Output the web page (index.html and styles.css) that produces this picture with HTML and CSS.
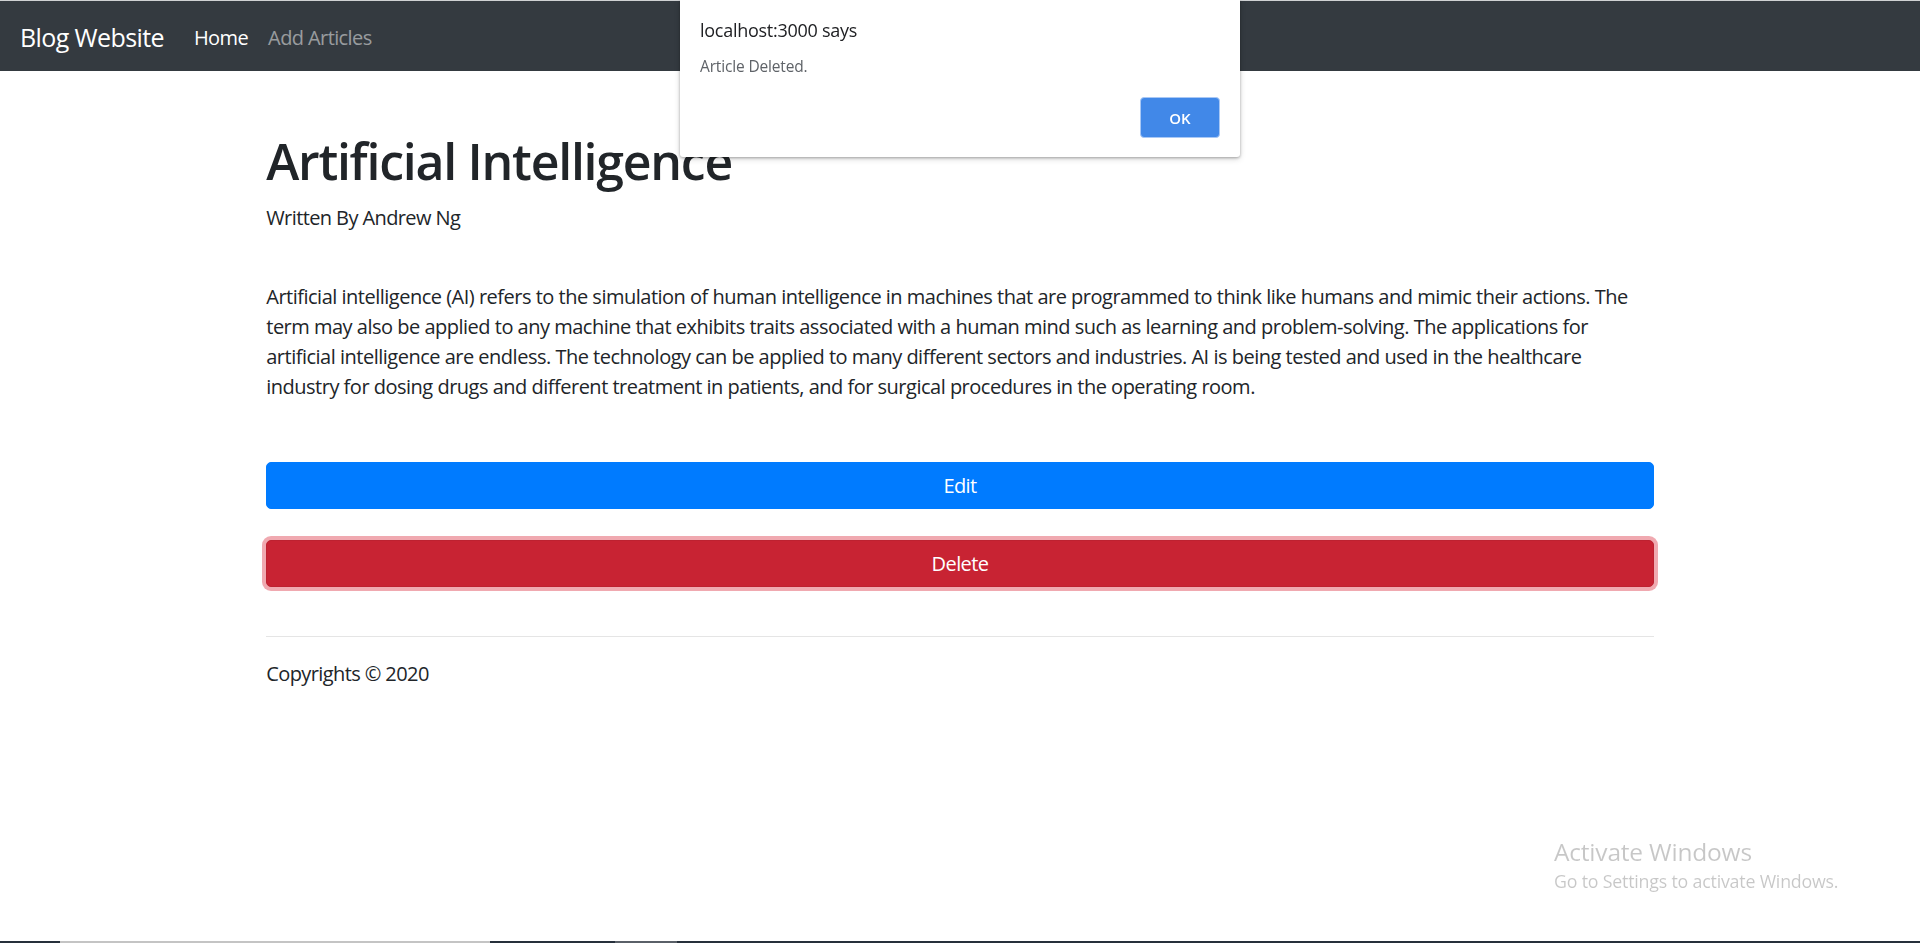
FILE: index.html
```html
<!DOCTYPE html>
<html lang="en">
<head>
<meta charset="utf-8">
<title>Blog Website</title>
<link rel="stylesheet" href="styles.css">
</head>
<body>
<nav class="navbar">
  <a class="brand" href="#">Blog Website</a>
  <ul class="nav">
    <li><a class="nav-link active" href="#">Home</a></li>
    <li><a class="nav-link" href="#">Add Articles</a></li>
  </ul>
</nav>

<main class="container">
  <h1 class="title">Artificial Intelligence</h1>
  <p class="author">Written By Andrew Ng</p>
  <p class="body-text">Artificial intelligence (AI) refers to the simulation of human intelligence in machines that are programmed to think like humans and mimic their actions. The term may also be applied to any machine that exhibits traits associated with a human mind such as learning and problem-solving. The applications for artificial intelligence are endless. The technology can be applied to many different sectors and industries. AI is being tested and used in the healthcare industry for dosing drugs and different treatment in patients, and for surgical procedures in the operating room.</p>
  <div class="actions">
    <button class="btn btn-primary" type="button">Edit</button>
    <button class="btn btn-danger is-focused" type="button">Delete</button>
  </div>
  <hr class="rule">
  <footer class="footer">Copyrights © 2020</footer>
</main>

<div class="alert-dialog" role="alertdialog">
  <div class="alert-title">localhost:3000 says</div>
  <div class="alert-message">Article Deleted.</div>
  <div class="alert-buttons">
    <button class="alert-ok" type="button">OK</button>
  </div>
</div>

<div class="watermark">
  <div class="wm-title">Activate Windows</div>
  <div class="wm-sub">Go to Settings to activate Windows.</div>
</div>

<div class="taskbar-edge">
  <span class="seg dark" style="width:60px"></span>
  <span class="seg light" style="width:430px"></span>
  <span class="seg dark" style="width:125px"></span>
  <span class="seg mid" style="width:62px"></span>
  <span class="seg dark fill"></span>
</div>
</body>
</html>
```

FILE: styles.css
```css
* { box-sizing: border-box; }

html { font-size: 20px; }

body {
  margin: 0;
  font-family: "Open Sans", "Noto Sans", sans-serif;
  font-size: 1rem;
  line-height: 1.5;
  color: #212529;
  background: #fff;
  letter-spacing: -0.03em;
}

.navbar {
  display: flex;
  align-items: center;
  background: #343a40;
  border-top: 1px solid #cfd1d3;
  padding: 12px 1rem 8px;
  height: 71px;
}

.brand {
  color: #fff;
  text-decoration: none;
  font-size: 1.25rem;
  line-height: 1.5;
  margin-right: 1rem;
  padding: 0.3125rem 0;
}

.nav {
  display: flex;
  list-style: none;
  margin: 0;
  padding: 0;
}

.nav-link {
  display: block;
  padding: 0.5rem 0.5rem;
  color: rgba(255, 255, 255, 0.5);
  text-decoration: none;
}

.nav-link.active { color: #fff; }

.container {
  max-width: 1425px;
  margin: 3rem auto 0;
  padding: 0 18.75px;
}

.title {
  font-size: 2.5rem;
  font-weight: 600;
  line-height: 1.2;
  margin: 0 0 0.5rem;
  letter-spacing: -0.025em;
}

.author {
  margin: 0 0 2.55rem;
  position: relative;
  top: 2px;
}

.body-text {
  margin: 0 0 3rem;
  letter-spacing: -0.025em;
}

.actions {
  display: flex;
  flex-direction: column;
  gap: 1.55rem;
}

.btn {
  display: block;
  width: 100%;
  font-family: inherit;
  font-size: 1rem;
  line-height: 1.5;
  letter-spacing: -0.03em;
  padding: 0.375rem 0.75rem;
  border: 1px solid transparent;
  border-radius: 0.25rem;
  color: #fff;
  text-align: center;
  cursor: pointer;
}

.btn-primary {
  background: #007bff;
  border-color: #007bff;
}

.btn-danger {
  background: #dc3545;
  border-color: #dc3545;
}

.btn-danger.is-focused {
  background: #c82333;
  border-color: #bd2130;
  box-shadow: 0 0 0 0.2rem rgba(225, 83, 97, 0.5);
}

.rule {
  margin: 2.45rem 0 1.1rem;
  border: 0;
  border-top: 1px solid rgba(0, 0, 0, 0.1);
}

.footer {
  margin: 0;
}

/* browser alert dialog (overlay) */
.alert-dialog {
  position: fixed;
  top: 0;
  left: 680px;
  width: 560px;
  height: 157px;
  background: #fff;
  border-radius: 0 0 3px 3px;
  box-shadow: 0 1px 3px rgba(0, 0, 0, 0.3), 0 2px 6px rgba(0, 0, 0, 0.15);
  padding: 17px 20px 19px 20px;
  display: flex;
  flex-direction: column;
  font-family: "Open Sans", "Noto Sans", sans-serif;
  letter-spacing: 0;
}

.alert-title {
  font-size: 18px;
  line-height: 26px;
  color: #202124;
  letter-spacing: -0.015em;
}

.alert-message {
  font-size: 15.5px;
  line-height: 20px;
  color: #5f6368;
  margin-top: 13px;
  letter-spacing: -0.01em;
}

.alert-buttons {
  margin-top: auto;
  display: flex;
  justify-content: flex-end;
}

.alert-ok {
  width: 80px;
  height: 41px;
  background: #4188e8;
  color: #fff;
  border: 1px solid #a9c8f5;
  border-radius: 4px;
  font-family: inherit;
  font-size: 15px;
  font-weight: 600;
}

/* windows watermark (overlay) */
.watermark {
  position: fixed;
  left: 1554px;
  top: 835px;
  color: rgba(0, 0, 0, 0.22);
  font-family: "Open Sans", "Noto Sans", sans-serif;
  letter-spacing: -0.01em;
}

.wm-title {
  font-size: 24.5px;
  line-height: 34px;
}

.wm-sub {
  font-size: 17.8px;
  line-height: 24px;
}

.taskbar-edge {
  position: fixed;
  left: 0;
  right: 0;
  bottom: 0;
  height: 2px;
  display: flex;
}

.seg { display: block; height: 100%; }
.seg.dark { background: #26303b; }
.seg.light { background: #c4c4c4; }
.seg.mid { background: #5a6068; }
.seg.fill { flex: 1; }
```
